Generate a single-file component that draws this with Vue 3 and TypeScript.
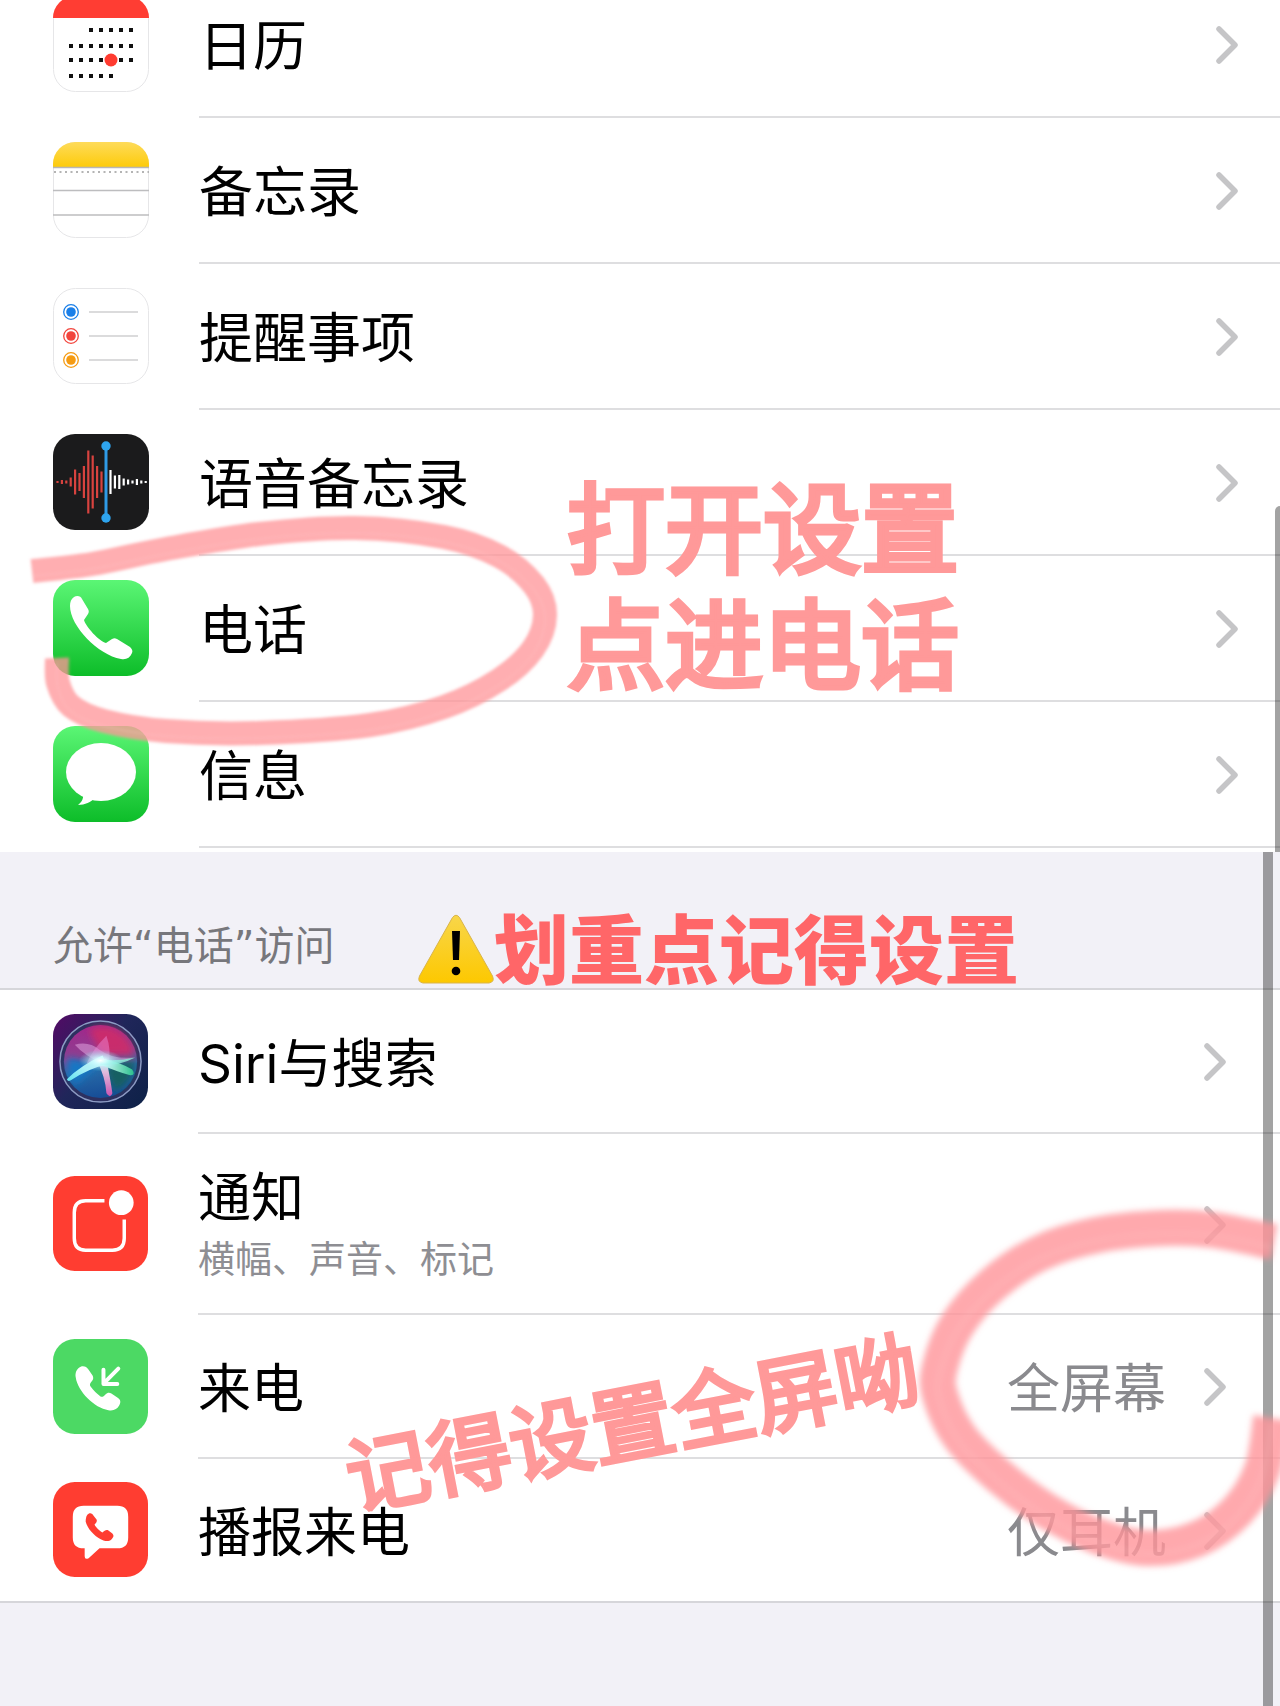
<script setup lang="ts">
type IconName =
  | 'calendar' | 'notes' | 'reminders' | 'voice' | 'phone' | 'messages'
  | 'siri' | 'notifications' | 'incoming' | 'announce'

interface Row {
  icon: IconName
  label: string
  detail?: string
  value?: string
}

type Point = [number, number]

const apps: Row[] = [
  { icon: 'calendar', label: '日历' },
  { icon: 'notes', label: '备忘录' },
  { icon: 'reminders', label: '提醒事项' },
  { icon: 'voice', label: '语音备忘录' },
  { icon: 'phone', label: '电话' },
  { icon: 'messages', label: '信息' },
]

const access: Row[] = [
  { icon: 'siri', label: 'Siri与搜索' },
  { icon: 'notifications', label: '通知', detail: '横幅、声音、标记' },
  { icon: 'incoming', label: '来电', value: '全屏幕' },
  { icon: 'announce', label: '播报来电', value: '仅耳机' },
]

const groups = [
  { id: 'apps', rows: apps },
  { id: 'access', rows: access },
]

// Calendar dots: [first column, last column, y]
const calendarRows = [[2, 6, 34], [0, 6, 50], [0, 6, 64], [0, 4, 80]]
const calendarDots = calendarRows.flatMap(([from, to, y]) =>
  Array.from({ length: to - from + 1 }, (_, i) => ({ x: 18 + (from + i) * 10, y })),
)

const redBars = [2, 4, 3, 9, 25, 18, 32, 63, 53, 32, 21]
const whiteBars = [24, 13, 14, 7, 5, 3, 6, 3, 2]

const reminderDots = [
  { y: 24, color: '#1a7fe8' },
  { y: 48, color: '#f2453d' },
  { y: 72, color: '#f59b12' },
]

// Smooth curve through the given points
function smooth(points: Point[]): string {
  let d = `M${points[0][0]} ${points[0][1]}`
  for (let i = 0; i < points.length - 1; i++) {
    const a = points[Math.max(i - 1, 0)]
    const b = points[i]
    const c = points[i + 1]
    const e = points[Math.min(i + 2, points.length - 1)]
    d += ` C${b[0] + (c[0] - a[0]) / 6} ${b[1] + (c[1] - a[1]) / 6}`
    d += ` ${c[0] - (e[0] - b[0]) / 6} ${c[1] - (e[1] - b[1]) / 6} ${c[0]} ${c[1]}`
  }
  return d
}

const phoneLoop = smooth([
  [32, 571], [92, 564], [166, 549], [259, 534], [355, 528], [444, 537], [499, 556],
  [534, 585], [545, 615], [533, 649], [499, 680], [444, 707], [370, 725], [259, 733],
  [166, 731], [104, 721], [71, 706], [58, 683], [57, 658],
])

const valueLoop = smooth([
  [394, 390], [333, 378], [283, 376], [217, 383], [160, 401], [112, 433], [77, 473],
  [60, 515], [60, 543], [80, 585], [119, 624], [167, 659], [217, 684], [267, 696],
  [317, 687], [357, 659], [382, 618], [391, 566],
])

const handset =
  'M21 17 C24 15 28 16 29 19 L35 29 C36 31 36 32 35 34 L31 40 C33 47 46 61 53 63 L59 59 C61 58 62 58 64 59 L77 67 C79 69 80 71 79 73 C77 78 73 80 68 79 C45 75 17 46 17 26 C17 22 18 19 21 17 Z'
</script>

<template>
  <main class="page">
    <section v-for="group in groups" :key="group.id" class="panel" :class="group.id">
      <header v-if="group.id === 'access'" class="group-head">
        <h2>允许“电话”访问</h2>
        <p class="key-note">
          <svg class="warning" viewBox="0 0 76 70" aria-hidden="true">
            <defs>
              <linearGradient id="warn" x1="0" y1="0" x2="0" y2="1">
                <stop offset="0" stop-color="#f8d64a" />
                <stop offset="1" stop-color="#fdc800" />
              </linearGradient>
            </defs>
            <path d="M34.500 3.500 Q38 -1 41.500 3.500 L74.500 62 Q77 68 71 69 H5 Q-1 68 1.500 62 Z" fill="url(#warn)" stroke="#d9b44a" stroke-width="1" />
            <path d="M34 17 H42 L41 46 H35 Z" fill="#000" />
            <circle cx="38" cy="57" r="4.300" fill="#000" />
          </svg>
          <strong>划重点记得设置</strong>
        </p>
      </header>

      <ul class="list">
        <li v-for="row in group.rows" :key="row.label">
          <a href="#" class="row" :class="{ tall: row.detail }">
            <svg class="icon" viewBox="0 0 96 96" aria-hidden="true">
              <g v-if="row.icon === 'calendar'">
                <rect x=".5" y=".5" width="95" height="95" rx="22" fill="#fff" stroke="#e6e6e8" />
                <path d="M0 22 A22 22 0 0 1 22 0 H74 A22 22 0 0 1 96 22 Z" fill="#ff3d33" />
                <rect v-for="(dot, i) in calendarDots" :key="i" :x="dot.x - 2" :y="dot.y - 2" width="4" height="4" fill="#111" />
                <circle cx="58" cy="64" r="6.500" fill="#ff3b30" />
              </g>
              <g v-else-if="row.icon === 'notes'">
                <rect x=".5" y=".5" width="95" height="95" rx="22" fill="#fff" stroke="#e6e6e8" />
                <defs>
                  <linearGradient id="note" x1="0" y1="0" x2="0" y2="1">
                    <stop offset="0" stop-color="#fedb5a" />
                    <stop offset="1" stop-color="#fdcb0a" />
                  </linearGradient>
                </defs>
                <path d="M0 25 V22 A22 22 0 0 1 22 0 H74 A22 22 0 0 1 96 22 V25 Z" fill="url(#note)" />
                <path d="M0 25.500 H96" stroke="#b9b6b2" stroke-width="1.500" />
                <path d="M1 30 H96" stroke="#b4b4b4" stroke-width="2" stroke-dasharray="2 3.500" />
                <path d="M0 48.500 H96 M0 73 H96" stroke="#bdbdbf" stroke-width="1.500" />
              </g>
              <g v-else-if="row.icon === 'reminders'">
                <rect x=".5" y=".5" width="95" height="95" rx="22" fill="#fff" stroke="#e6e6e8" />
                <g v-for="dot in reminderDots" :key="dot.y">
                  <circle cx="18" :cy="dot.y" r="7.300" fill="#fff" :stroke="dot.color" stroke-width="1.300" />
                  <circle cx="18" :cy="dot.y" r="4.800" :fill="dot.color" />
                  <path :d="`M36 ${dot.y} H85`" stroke="#cfcfd1" stroke-width="1.300" />
                </g>
              </g>
              <g v-else-if="row.icon === 'voice'">
                <rect width="96" height="96" rx="22" fill="#1b1b1c" />
                <path v-for="(h, i) in redBars" :key="`r${i}`" :d="`M${4.500 + i * 4.400} ${48 - h / 2} v${h}`" stroke="#d8433f" stroke-width="2.200" />
                <path v-for="(h, i) in whiteBars" :key="`w${i}`" :d="`M${57.500 + i * 4.400} ${48 - h / 2} v${h}`" stroke="#fff" stroke-width="2.200" />
                <path d="M53 12 V84" stroke="#2f9be6" stroke-width="3" />
                <circle cx="53" cy="12" r="4.700" fill="#2ea4ee" />
                <circle cx="53" cy="84" r="4.700" fill="#2ea4ee" />
              </g>
              <g v-else-if="row.icon === 'phone'">
                <defs>
                  <linearGradient id="green" x1="0" y1="0" x2="0" y2="1">
                    <stop offset="0" stop-color="#5bf675" />
                    <stop offset="1" stop-color="#0dbd29" />
                  </linearGradient>
                </defs>
                <rect width="96" height="96" rx="22" fill="url(#green)" />
                <path :d="handset" fill="#fff" />
              </g>
              <g v-else-if="row.icon === 'messages'">
                <rect width="96" height="96" rx="22" fill="url(#green)" />
                <ellipse cx="48" cy="46" rx="35" ry="29" fill="#fff" />
                <path d="M30 66 C31 72 29 76 25 79 C32 79 38 76 42 72 Z" fill="#fff" />
              </g>
              <g v-else-if="row.icon === 'siri'">
                <defs>
                  <linearGradient id="siri-bg" x1="0" y1="0" x2="1" y2=".8">
                    <stop offset="0" stop-color="#540a66" />
                    <stop offset=".5" stop-color="#20265a" />
                    <stop offset="1" stop-color="#10224a" />
                  </linearGradient>
                  <linearGradient id="siri-orb" x1=".35" y1="0" x2=".5" y2="1">
                    <stop offset="0" stop-color="#a0288c" />
                    <stop offset=".4" stop-color="#8d3f90" />
                    <stop offset=".62" stop-color="#276aa8" />
                    <stop offset="1" stop-color="#164c96" />
                  </linearGradient>
                  <radialGradient id="siri-glow">
                    <stop offset="0" stop-color="#fff" />
                    <stop offset=".3" stop-color="#cffcff" stop-opacity=".85" />
                    <stop offset="1" stop-color="#7de5ee" stop-opacity="0" />
                  </radialGradient>
                  <linearGradient id="siri-pink" x1="0" y1="0" x2="0" y2="1">
                    <stop offset="0" stop-color="#fff" />
                    <stop offset="1" stop-color="#e055b4" />
                  </linearGradient>
                  <linearGradient id="siri-teal" x1="0" y1="0" x2="1" y2="0">
                    <stop offset="0" stop-color="#e6ffff" />
                    <stop offset="1" stop-color="#2bc08e" />
                  </linearGradient>
                  <linearGradient id="siri-cyan" x1="1" y1="0" x2="0" y2="1">
                    <stop offset="0" stop-color="#fff" />
                    <stop offset="1" stop-color="#5fe3f0" />
                  </linearGradient>
                  <filter id="siri-soft"><feGaussianBlur stdDeviation="4" /></filter>
                  <filter id="siri-edge"><feGaussianBlur stdDeviation=".6" /></filter>
                </defs>
                <rect width="96" height="96" rx="22" fill="url(#siri-bg)" />
                <circle cx="48" cy="48" r="41" fill="#2d3060" />
                <circle cx="48" cy="48" r="37" fill="url(#siri-orb)" />
                <g filter="url(#siri-soft)">
                  <path d="M50 42 L36 16 Q52 8 68 18 Q80 28 82 42 Z" fill="#d22a66" opacity=".85" />
                  <path d="M52 54 L82 46 Q84 62 70 74 L62 78 Z" fill="#125e62" />
                  <path d="M46 52 L15 44 Q12 58 22 72 Z" fill="#1577c4" />
                </g>
                <g filter="url(#siri-edge)">
                  <path d="M22 31 Q36 27 47 36 Q60 46 82 44 Q60 52 48 49 Q32 42 22 31 Z" fill="#f0b8ee" opacity=".45" />
                  <path d="M54 22 Q40 36 34 50 L56 50 Q59 36 54 22 Z" fill="#ef8ddd" opacity=".45" />
                  <path d="M44 46 L54 46 Q58 66 60 80 Q58 86 54 80 Q53 64 44 46 Z" fill="url(#siri-pink)" opacity=".9" />
                  <path d="M48 45 Q66 48 80 56 Q84 62 78 62 Q64 58 48 51 Z" fill="url(#siri-teal)" />
                  <path d="M50 42 Q28 52 14 66 Q15 69 18 67 Q36 55 54 51 Z" fill="url(#siri-cyan)" />
                  <path d="M48 46 Q66 48 83 44 Q66 53 48 51 Z" fill="#8ff0d8" opacity=".8" />
                </g>
                <ellipse cx="48" cy="47" rx="22" ry="11" fill="url(#siri-glow)" />
                <circle cx="48" cy="48" r="41" fill="none" stroke="#8d9cc4" stroke-width="1.500" />
              </g>
              <g v-else-if="row.icon === 'notifications'">
                <rect width="96" height="96" rx="22" fill="#ff3d31" />
                <path d="M52 25 H33 Q21.500 25 21.500 37 V63 Q21.500 75 33 75 H60 Q72 75 72 63 V44" fill="none" stroke="#fff" stroke-width="3.500" />
                <circle cx="69" cy="27" r="12.500" fill="#fff" />
              </g>
              <g v-else-if="row.icon === 'incoming'">
                <rect width="96" height="96" rx="22" fill="#4cd964" />
                <path d="M28 28 C31 27 34 28 36 31 L40 37 C41 39 41 41 39 43 C37 45 37 47 38 48 C41 52 45 56 48 58 C50 59 51 58 53 56 C55 54 57 54 59 55 L65 59 C68 61 69 63 67 67 C65 71 61 73 56 72 C42 70 25 53 23 39 C22 34 24 30 28 28 Z" fill="#fff" />
                <path d="M66 30 L51 45 M51 31 V45.500 H65" fill="none" stroke="#fff" stroke-width="4" stroke-linecap="round" stroke-linejoin="round" />
              </g>
              <g v-else>
                <rect width="96" height="96" rx="22" fill="#ff3d31" />
                <path d="M31 24 H65 Q76 24 76 35 V56 Q76 67 65 67 H47 L36 77 Q32 79 32 75 V67 H31 Q20 67 20 56 V35 Q20 24 31 24 Z" fill="#fff" />
                <path d="M36 32 C38 31 40 32 41 34 L44 38 C45 40 43 42 42 43 C43 46 48 50 50 51 C52 49 54 48 56 49 L60 52 C62 54 61 56 59 58 C57 60 54 60 51 59 C43 56 35 48 33 40 C33 36 34 33 36 32 Z" fill="#ff3d31" />
              </g>
            </svg>
            <span class="body">
              <span class="text">
                <span class="label">{{ row.label }}</span>
                <small v-if="row.detail" class="detail">{{ row.detail }}</small>
              </span>
              <span v-if="row.value" class="value">{{ row.value }}</span>
              <svg class="chevron" viewBox="0 0 22 38" aria-hidden="true">
                <path d="M3 3 L19 19 L3 35" fill="none" stroke="#c5c5c7" stroke-width="5.500" stroke-linecap="round" stroke-linejoin="round" />
              </svg>
            </span>
          </a>
        </li>
      </ul>

      <div class="scrollbar"></div>

      <template v-if="group.id === 'apps'">
        <svg class="marker marker-phone" viewBox="0 0 580 852" aria-hidden="true">
          <defs>
            <filter id="brush"><feGaussianBlur stdDeviation="1.500" /></filter>
          </defs>
          <g filter="url(#brush)" fill="none">
            <path :d="phoneLoop" stroke="#ff9499" stroke-width="24" opacity=".76" />
            <path :d="phoneLoop" stroke="#ffc4c6" stroke-width="1" opacity=".5" transform="translate(0 5)" />
          </g>
        </svg>
        <p class="tip tip-open">打开设置<br />点进电话</p>
      </template>
      <template v-else>
        <svg class="marker marker-value" viewBox="0 0 400 854" aria-hidden="true">
          <defs>
            <filter id="brush-wide"><feGaussianBlur stdDeviation="3" /></filter>
          </defs>
          <g filter="url(#brush-wide)" fill="none">
            <path :d="valueLoop" stroke="#ff9499" stroke-width="36" opacity=".8" />
            <path :d="valueLoop" stroke="#ffc4c6" stroke-width="2" opacity=".5" transform="translate(0 6)" />
          </g>
        </svg>
        <p class="tip tip-full">记得设置全屏呦</p>
      </template>
    </section>
  </main>
</template>

<style>
body {
  margin: 0;
}
</style>

<style scoped>
.page {
  display: flex;
  flex-direction: column;
  min-height: 100vh;
  overflow: hidden;
  background: #f2f1f7;
  color: #000;
  font-family: Inter, "Noto Sans CJK SC", sans-serif;
}

.panel {
  position: relative;
  overflow: hidden;
}

.apps {
  --edge: 42px;
  --row: 146px;
  --icon: 96px;
  --label: 54px;
  padding-bottom: 4px;
  background: #fff;
}

.access {
  --edge: 54px;
  --row: 144px;
  --icon: 95px;
  --label: 53px;
  flex: 1;
}

.group-head {
  display: flex;
  align-items: flex-end;
  box-sizing: border-box;
  height: 138px;
  padding-left: 53px;
  border-bottom: 2px solid #d6d6da;
}

h2 {
  width: 365px;
  margin: 0 0 14px;
  color: #77777c;
  font-family: "DejaVu Sans", "Noto Sans CJK SC", sans-serif;
  font-size: 40px;
  font-weight: 400;
  line-height: 56px;
}

.key-note {
  display: flex;
  align-items: flex-end;
  margin: 0;
  color: #ff6668;
  font-size: 75px;
  line-height: 74px;
}

.key-note strong {
  font-weight: 900;
  white-space: nowrap;
}

.warning {
  width: 76px;
  height: 70px;
  margin-bottom: 4px;
}

.list {
  margin: 0;
  padding: 0;
  list-style: none;
  background: #fff;
}

.apps .list {
  margin-top: -28px;
}

.row {
  display: flex;
  align-items: stretch;
  height: var(--row);
  padding-left: 53px;
  color: inherit;
  text-decoration: none;
}

.row.tall {
  height: 181px;
}

.icon {
  flex: none;
  align-self: center;
  width: var(--icon);
  height: var(--icon);
  margin-right: 50px;
  margin-bottom: 2px;
}

.body {
  display: flex;
  flex: 1;
  align-items: center;
  padding-right: var(--edge);
  border-bottom: 2px solid #dedee0;
}

.access .list {
  border-bottom: 2px solid #d6d6da;
}

.access li:last-child .row {
  height: 142px;
}

.access li:last-child .body {
  border-bottom: 0;
}

.text {
  display: flex;
  flex: 1;
  flex-direction: column;
}

.label,
.value {
  padding-top: 6px;
  font-size: var(--label);
  line-height: 72px;
}

.tall .label {
  padding-top: 0;
}

.value {
  margin-right: 38px;
  color: #8a8a8e;
}

.detail {
  color: #8e8e93;
  font-size: 37px;
  line-height: 52px;
}

.chevron {
  width: 22px;
  height: 38px;
  margin-top: 2px;
}

.scrollbar {
  position: absolute;
  bottom: 0;
  background: rgba(0, 0, 0, 0.36);
}

.apps .scrollbar {
  top: 506px;
  right: 0;
  width: 5px;
  border-top-left-radius: 5px;
}

.access .scrollbar {
  top: 0;
  right: 7px;
  width: 10px;
}

.marker {
  position: absolute;
  top: 0;
  pointer-events: none;
}

.marker-phone {
  left: 0;
  width: 580px;
  height: 852px;
}

.marker-value {
  right: 0;
  width: 400px;
  height: 854px;
}

.tip {
  position: absolute;
  margin: 0;
  color: #ff9999;
  font-weight: 400;
  white-space: nowrap;
  stroke-linejoin: round;
}

.tip-open {
  top: 472px;
  left: 567px;
  font-size: 98px;
  line-height: 116px;
  -webkit-text-stroke: 5px #ff9999;
}

.tip-full {
  top: 522px;
  left: 342px;
  font-size: 83px;
  line-height: 100px;
  transform: rotate(-11deg);
  -webkit-text-stroke: 4px #ff9999;
}
</style>
